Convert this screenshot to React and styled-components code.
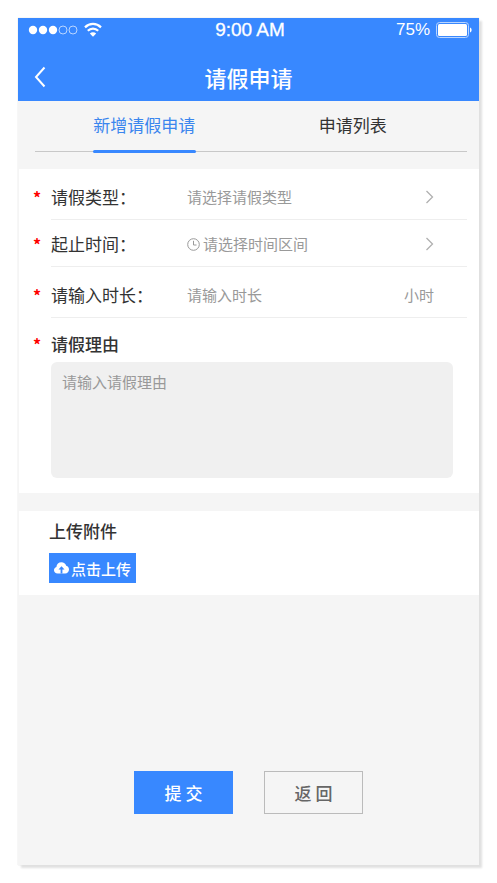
import React, { useState } from "react";
import styled, { createGlobalStyle } from "styled-components";

function StatusBar() {
  return (
    <StatusRow>
      <StatusLeft>
        <svg width="50" height="12" viewBox="0 0 50 12" aria-hidden="true">
          <circle cx="5" cy="6" r="4.2" fill="#fff" />
          <circle cx="15" cy="6" r="4.2" fill="#fff" />
          <circle cx="25" cy="6" r="4.2" fill="#fff" />
          <circle cx="35" cy="6" r="4" fill="none" stroke="#b9d5ff" />
          <circle cx="45" cy="6" r="4" fill="none" stroke="#b9d5ff" />
        </svg>
        <svg width="18" height="16" viewBox="0 0 18 16" aria-hidden="true">
          <g fill="none" stroke="#fff" strokeWidth="2.2">
            <path d="M1 5.4C5.6 .8 12.4 .8 17 5.4" />
            <path d="M3.8 8.8c3-3 7.4-3 10.4 0" />
          </g>
          <path d="M5.8 11.4c1.9-1.7 4.5-1.7 6.4 0L9 14.8z" fill="#fff" />
        </svg>
      </StatusLeft>
      <Clock>9:00 AM</Clock>
      <StatusRight>
        <span>75%</span>
        <svg width="36" height="16" viewBox="0 0 36 16" aria-hidden="true">
          <rect x="0.5" y="0.5" width="32" height="15" rx="3" fill="none" stroke="#b9d5ff" />
          <rect x="2" y="2" width="29" height="12" rx="1.5" fill="#fff" />
          <path d="M34 5.5c1.2.5 1.6 1.3 1.6 2.5s-.4 2-1.6 2.5z" fill="#fff" />
        </svg>
      </StatusRight>
    </StatusRow>
  );
}

function Arrow() {
  return (
    <svg width="9" height="14" viewBox="0 0 9 14" aria-hidden="true">
      <path d="M1.5 1l6 6-6 6" fill="none" stroke="#b0b0b0" strokeWidth="1.3" />
    </svg>
  );
}

function Field({ label, id, top, children }) {
  return (
    <Row $top={top}>
      <Star>*</Star>
      <Line>
        <Label htmlFor={id}>{label}</Label>
        {children}
      </Line>
    </Row>
  );
}

function App() {
  const [tab, setTab] = useState("new");

  return (
    <>
      <GlobalStyle />
      <Screen>
        <Header>
          <StatusBar />
          <TitleBar>
            <BackButton type="button" aria-label="返回上一页">
              <svg width="12" height="22" viewBox="0 0 12 22" aria-hidden="true">
                <path d="M10.5 1.5L2 11l8.5 9.5" fill="none" stroke="#fff" strokeWidth="2" />
              </svg>
            </BackButton>
            <Title>请假申请</Title>
          </TitleBar>
        </Header>

        <Tabs role="tablist">
          <Tab
            type="button"
            role="tab"
            aria-selected={tab === "new"}
            $active={tab === "new"}
            onClick={() => setTab("new")}
          >
            新增请假申请
          </Tab>
          <Tab
            type="button"
            role="tab"
            aria-selected={tab === "list"}
            $active={tab === "list"}
            onClick={() => setTab("list")}
          >
            申请列表
          </Tab>
        </Tabs>

        <FormPanel>
          <Field label="请假类型：" id="type" top={16}>
            <TypeSelect id="type" defaultValue="">
              <option value="">请选择请假类型</option>
              <option value="personal">事假</option>
              <option value="sick">病假</option>
            </TypeSelect>
            <Arrow />
          </Field>
          <Field label="起止时间：" id="range" top={12}>
            <RangeButton type="button" id="range">
              <svg width="13" height="13" viewBox="0 0 13 13" aria-hidden="true">
                <g fill="none" stroke="#999">
                  <circle cx="6.5" cy="6.5" r="5.8" />
                  <path d="M6.5 2.8v4.2h3" />
                </g>
              </svg>
              请选择时间区间
            </RangeButton>
            <Arrow />
          </Field>
          <Field label="请输入时长：" id="hours" top={16}>
            <HoursInput id="hours" placeholder="请输入时长" />
            <Unit>小时</Unit>
          </Field>
          <ReasonHead>
            <Star>*</Star>
            <ReasonLabel htmlFor="reason">请假理由</ReasonLabel>
          </ReasonHead>
          <Reason id="reason" placeholder="请输入请假理由" />
        </FormPanel>

        <UploadPanel>
          <UploadTitle>上传附件</UploadTitle>
          <UploadButton type="button">
            <svg width="15" height="12" viewBox="0 0 15 12" aria-hidden="true">
              <path
                d="M3.6 11.5C1.5 11.5 0 10 0 8.2c0-1.5 1-2.7 2.4-3.1C2.6 2.3 4.7.3 7.4.3c2.3 0 4.2 1.4 4.8 3.5C13.9 4.2 15 5.7 15 7.5c0 2.3-1.6 4-3.8 4z"
                fill="#fff"
              />
              <path d="M7.5 4.2l3 3.4H8.4v3.9H6.6V7.6H4.5z" fill="#3888ff" />
            </svg>
            点击上传
          </UploadButton>
        </UploadPanel>

        <Footer>
          <ActionButton type="submit" $primary>
            提 交
          </ActionButton>
          <ActionButton type="button">返 回</ActionButton>
        </Footer>
      </Screen>
    </>
  );
}

export default App;

const GlobalStyle = createGlobalStyle`
  * {
    box-sizing: border-box;
  }
  body {
    margin: 0;
    background: #fff;
    font-family: "Noto Sans CJK SC", sans-serif;
    color: #333;
  }
  button, input, select, textarea {
    font-family: inherit;
    margin: 0;
    padding: 0;
    border: 0;
    background: none;
  }
  svg {
    flex: none;
  }
`;

const Screen = styled.main`
  display: flex;
  flex-direction: column;
  min-height: calc(100vh - 36px);
  margin: 18px;
  background: #f5f5f5;
  box-shadow: 3px 3px 2px #e0e0e0, 0 0 1px #ccc;
`;

const Header = styled.header`
  background: #3888ff;
  color: #fff;
`;

const StatusRow = styled.div`
  display: grid;
  grid-template-columns: 1fr auto 1fr;
  align-items: center;
  height: 24px;
  padding: 0 7px 0 10px;
  font-family: "Liberation Sans", Arial, sans-serif;
  font-size: 17px;
`;

const StatusLeft = styled.div`
  display: flex;
  align-items: center;
  gap: 6px;
`;

const Clock = styled.div`
  font-size: 19px;
  -webkit-text-stroke: 0.3px #fff;
`;

const StatusRight = styled.div`
  display: flex;
  align-items: center;
  justify-content: flex-end;
  gap: 6px;
`;

const TitleBar = styled.div`
  display: grid;
  grid-template-columns: 1fr auto 1fr;
  align-items: center;
  height: 59px;
  padding: 11px 16px 0;
`;

const BackButton = styled.button`
  display: flex;
  justify-self: start;
  cursor: pointer;
`;

const Title = styled.h1`
  margin: 0;
  font-size: 22px;
  font-weight: 500;
  line-height: 32px;
`;

const Tabs = styled.div`
  display: flex;
  margin: 0 12px 16px 17px;
  padding: 0 10px 0 5px;
  box-shadow: inset 0 -1px #f5f5f5, inset 0 -2px #c8c8c8;
`;

const Tab = styled.button`
  flex: 1;
  display: flex;
  flex-direction: column;
  align-items: center;
  padding-top: 12px;
  font-size: 17px;
  line-height: 24px;
  color: ${({ $active }) => ($active ? "#3b86ee" : "#333")};
  cursor: pointer;

  &::after {
    content: "";
    width: 103px;
    height: 3px;
    margin-top: 13px;
    border-radius: 2px;
    background: ${({ $active }) => ($active ? "#3888ff" : "transparent")};
  }
`;

const FormPanel = styled.section`
  margin-left: 1px;
  padding: 0 12px 15px 14px;
  background: #fff;
`;

const Row = styled.div`
  display: flex;
  padding-top: ${({ $top }) => $top}px;
`;

const Star = styled.span`
  width: 18px;
  font-size: 16px;
  font-weight: 700;
  line-height: 24px;
  color: #f00;
`;

const Line = styled.div`
  flex: 1;
  display: flex;
  align-items: center;
  min-width: 0;
  height: 35px;
  padding: 0 33px 10px 0;
  border-bottom: 1px solid #eee;
`;

const Label = styled.label`
  width: 136px;
  font-size: 17px;
  line-height: 24px;
`;

const TypeSelect = styled.select`
  flex: 1;
  min-width: 0;
  appearance: none;
  font-size: 15px;
  line-height: 24px;
  color: #999;
`;

const RangeButton = styled.button`
  flex: 1;
  display: flex;
  align-items: center;
  gap: 3px;
  font-size: 15px;
  line-height: 24px;
  color: #999;
  cursor: pointer;
`;

const HoursInput = styled.input`
  flex: 1;
  min-width: 0;
  font-size: 15px;
  line-height: 24px;
  color: #333;

  &::placeholder {
    color: #999;
  }
`;

const Unit = styled.span`
  font-size: 15px;
  line-height: 24px;
  color: #999;
`;

const ReasonHead = styled.div`
  display: flex;
  padding-top: 14px;
`;

const ReasonLabel = styled.label`
  font-size: 17px;
  font-weight: 500;
  line-height: 24px;
`;

const Reason = styled.textarea`
  display: block;
  width: calc(100% - 32px);
  height: 116px;
  margin: 6px 14px 0 18px;
  padding: 8px 11px;
  border-radius: 6px;
  background: #f0f0f0;
  font-size: 15px;
  line-height: 24px;
  resize: none;

  &::placeholder {
    color: #999;
  }
`;

const UploadPanel = styled.section`
  margin: 18px 0 0 1px;
  padding: 8px 30px 12px;
  background: #fff;
`;

const UploadTitle = styled.h2`
  margin: 0 0 10px;
  font-size: 17px;
  font-weight: 500;
  line-height: 24px;
`;

const UploadButton = styled.button`
  display: flex;
  align-items: center;
  gap: 2px;
  height: 30px;
  padding: 0 5px;
  background: #3888ff;
  color: #fff;
  font-size: 15px;
  font-weight: 500;
  cursor: pointer;
`;

const Footer = styled.footer`
  display: flex;
  justify-content: center;
  gap: 31px;
  margin-top: auto;
  padding: 40px 0 51px;
`;

const ActionButton = styled.button`
  width: 99px;
  height: 43px;
  border: 1px solid ${({ $primary }) => ($primary ? "#3888ff" : "#bbb")};
  background: ${({ $primary }) => ($primary ? "#3888ff" : "transparent")};
  color: ${({ $primary }) => ($primary ? "#fff" : "#666")};
  font-size: 17px;
  font-weight: 500;
  cursor: pointer;
`;
